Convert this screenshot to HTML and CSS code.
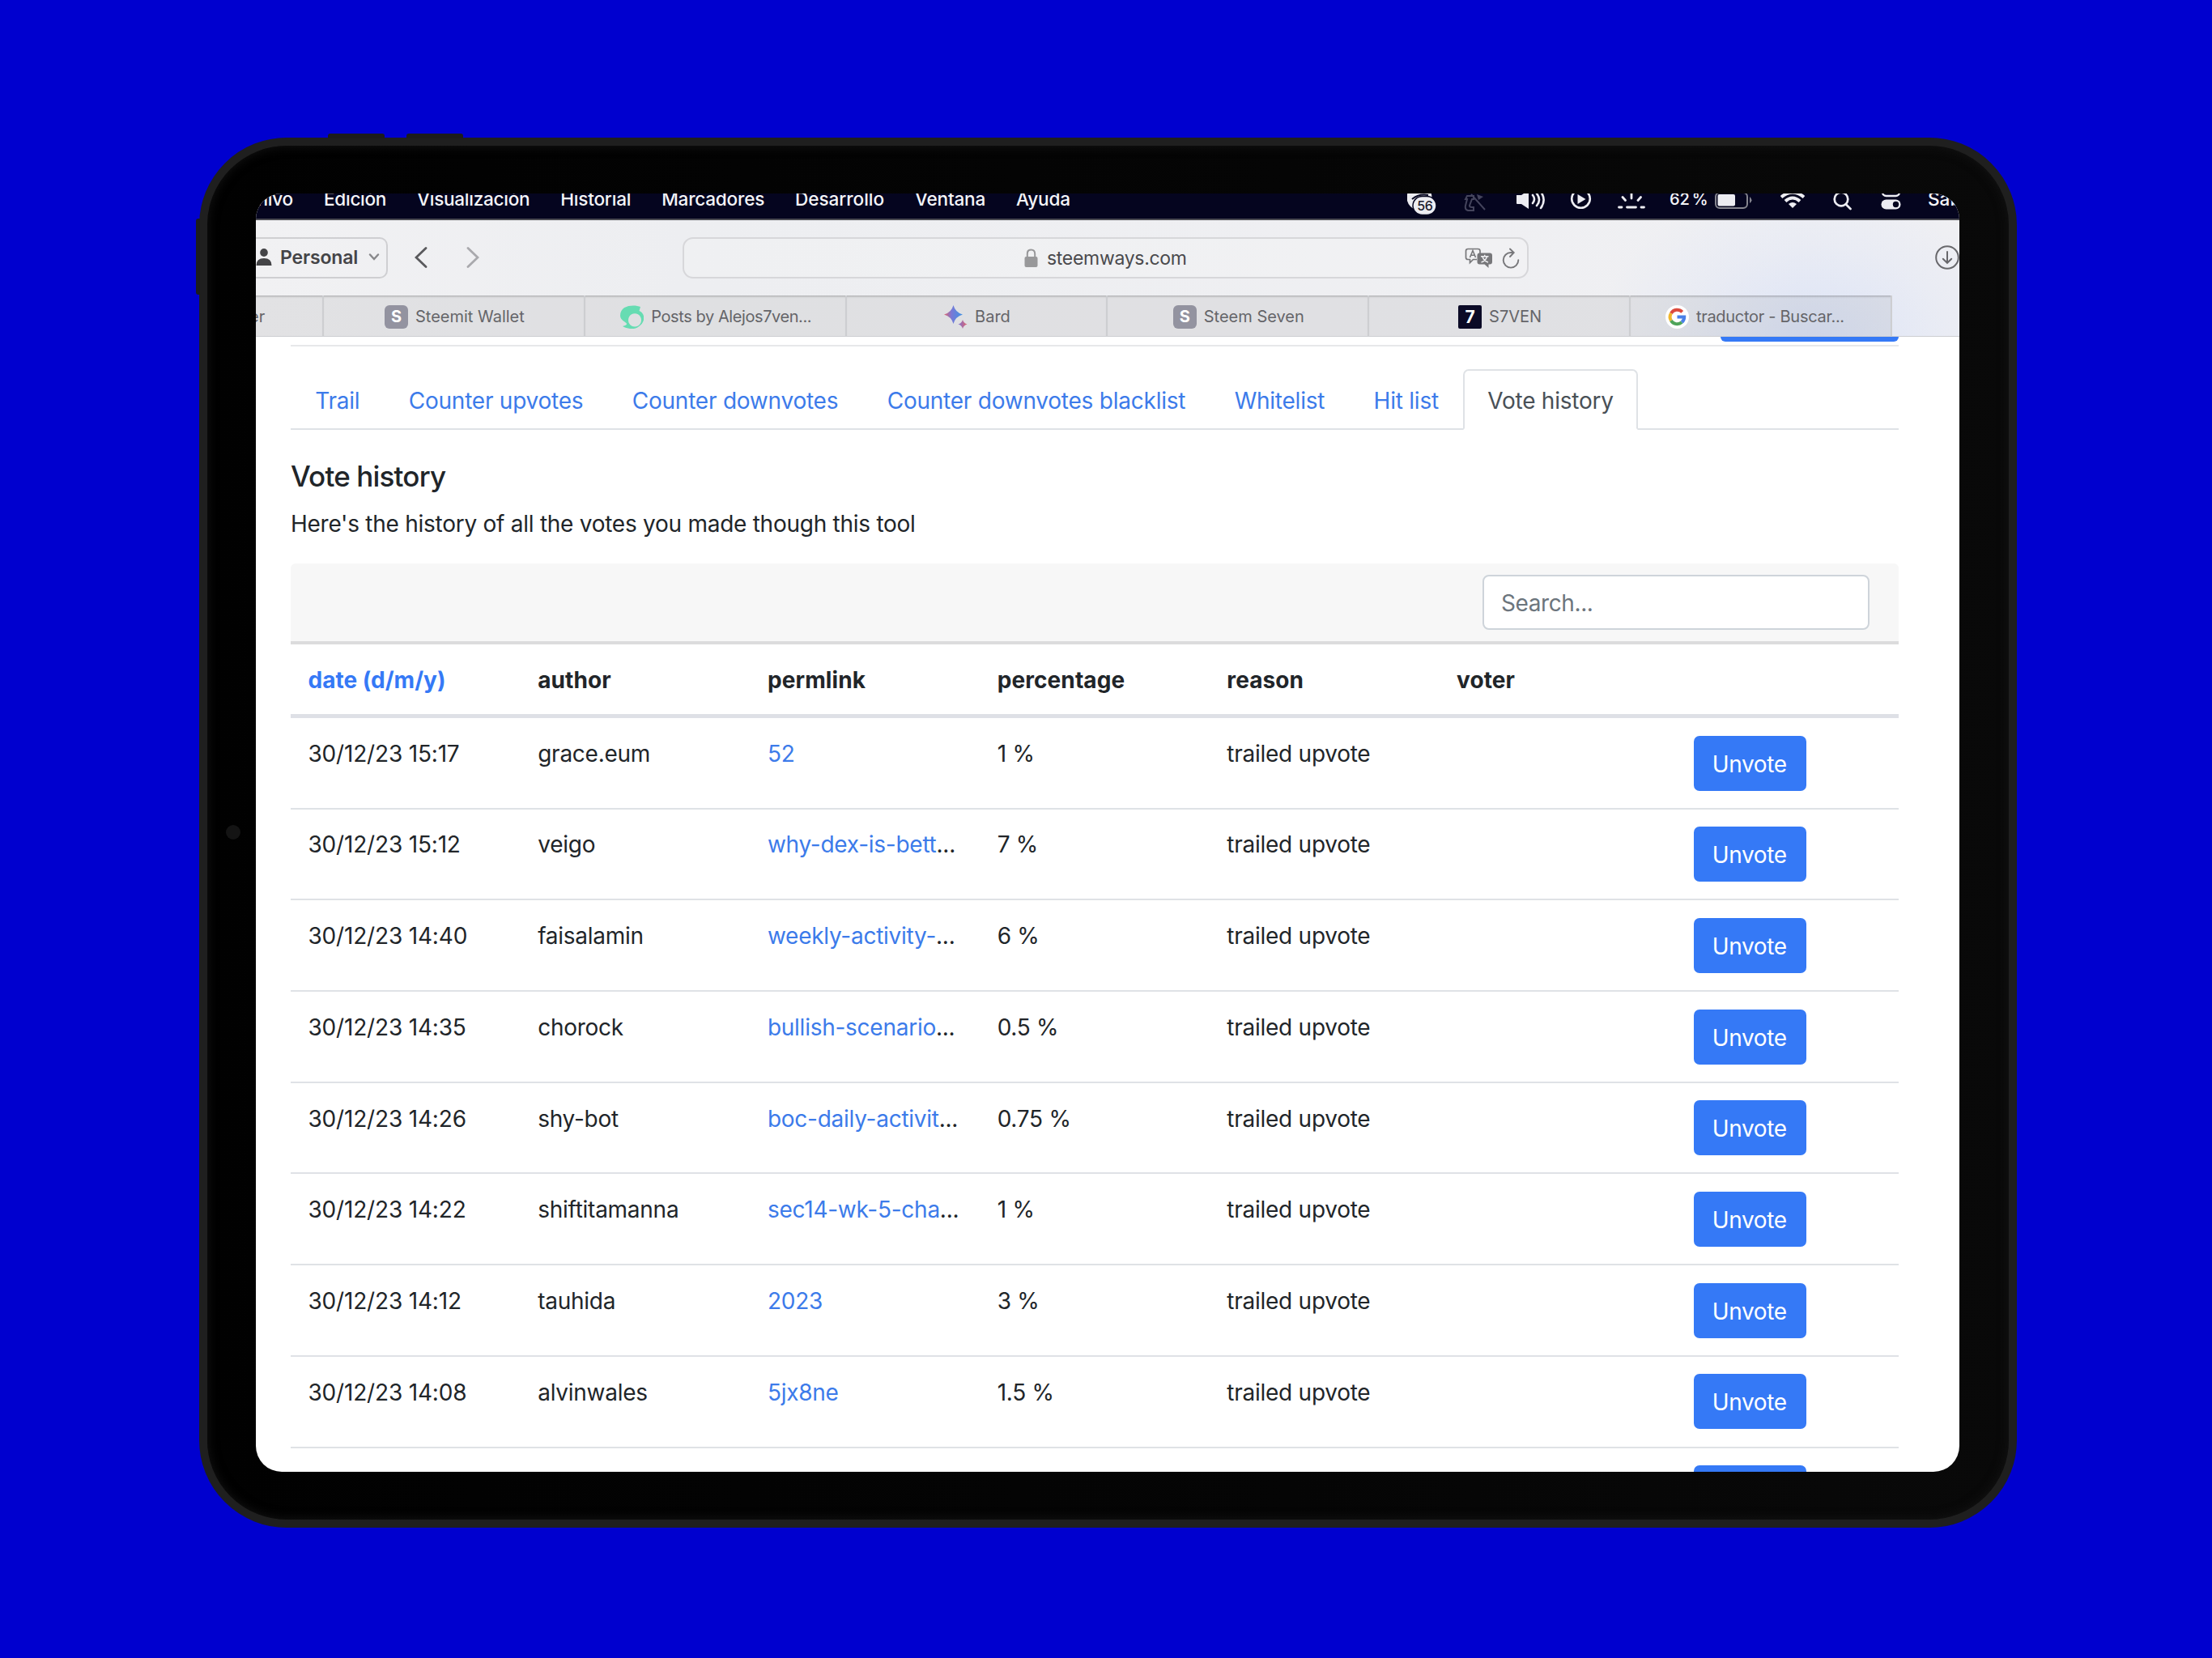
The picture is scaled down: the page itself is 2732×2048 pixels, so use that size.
FILE: index.html
```html
<!DOCTYPE html>
<html lang="es">
<head>
<meta charset="utf-8">
<title>Steemways – Vote history</title>
<link rel="stylesheet" href="styles.css">
</head>
<body>
<div class="tablet">
  <span class="key key-up"></span>
  <span class="key key-down"></span>
  <span class="key key-power"></span>
  <span class="camera"></span>
  <div class="screen">
    <div class="menubar">
      <div class="menu-cut"><span>Archivo</span></div>
      <nav class="menus">
        <span class="m-tight">Edición</span>
        <span class="m-tight">Visualización</span>
        <span>Historial</span>
        <span>Marcadores</span>
        <span class="m-wide">Desarrollo</span>
        <span>Ventana</span>
        <span>Ayuda</span>
      </nav>
      <div class="status">
        <svg width="39" height="31" viewBox="1738 239 39 31">
          <circle cx="1753" cy="244" r="15.500" fill="#ededf2"/>
          <path d="M1744 246q8-7 20-5" fill="none" stroke="#05051f" stroke-width="2"/>
          <rect x="1745" y="242.500" width="29" height="23" rx="11.500" fill="#ededf2" stroke="#05051f" stroke-width="1.500"/>
          <text x="1759.800" y="259.800" text-anchor="middle" class="badge-text">56</text>
        </svg>
        <svg width="34" height="31" viewBox="1807 239 34 31" fill="none" stroke="#44445c" stroke-width="2">
          <path d="M1812 242h8v4h-2l-3 8q0 2 3 2h2v4h-7q-4-1-3-6l2-8h-2zM1817 240l17 19"/>
          <path d="M1824 240l8 3-6 4z" fill="#44445c" stroke="none"/>
        </svg>
        <svg width="38" height="31" viewBox="1871 239 38 31" fill="none" stroke="#ededf2" stroke-width="2.600" stroke-linecap="round">
          <path d="M1873 241h6l9-6v23l-9-6h-5q-1 0-1-1z" fill="#ededf2" stroke="none"/>
          <path d="M1893 241q4 5 0 10M1898 239q6 8 0 15M1902.500 236q8 11 .5 21"/>
        </svg>
        <svg width="28" height="31" viewBox="1939 239 28 31">
          <circle cx="1952.500" cy="245.500" r="11.300" fill="none" stroke="#ededf2" stroke-width="2.600"/>
          <path d="M1948.500 240v12l10-6z" fill="#ededf2"/>
        </svg>
        <svg width="35" height="31" viewBox="1997 239 35 31" fill="none" stroke="#ededf2" stroke-width="2.800" stroke-linecap="round">
          <path d="M1999.500 256h3.500M2009.500 256h11M2027 256h3.500M2015 238v7M2004 243.500l3.500 4M2026.500 243.500l-3.500 4"/>
        </svg>
        <div class="battery">
          <span>62 %</span>
          <svg width="47" height="31" viewBox="2118 239 47 31">
            <rect x="2119" y="238" width="39" height="19" rx="5" fill="none" stroke="#85858f" stroke-width="2"/>
            <rect x="2121.500" y="240" width="21.500" height="14.500" rx="2" fill="#ededf2"/>
            <path d="M2161 243q5 4.500 0 8z" fill="#85858f"/>
          </svg>
        </div>
        <svg width="38" height="31" viewBox="2195 239 38 31" fill="none" stroke="#ededf2" stroke-width="4">
          <path d="M2200 243.500q14-11.500 28 0M2205 248.500q9-8 18 0"/>
          <path d="M2209 252q5-4 10 0l-5 5z" fill="#ededf2" stroke="none"/>
        </svg>
        <svg width="28" height="31" viewBox="2263 239 28 31" fill="none" stroke="#ededf2" stroke-width="2.700" stroke-linecap="round">
          <circle cx="2274" cy="246" r="8.300"/><path d="M2280 252.500l5.500 5.500"/>
        </svg>
        <svg width="30" height="31" viewBox="2321 239 30 31">
          <rect x="2325" y="233" width="21" height="9" rx="4.500" fill="none" stroke="#ededf2" stroke-width="2.400"/>
          <rect x="2323.500" y="246.500" width="24" height="12" rx="6" fill="#ededf2"/>
          <circle cx="2341.500" cy="252.500" r="3.700" fill="#05051f"/>
        </svg>
        <span class="clock">Sáb</span>
      </div>
    </div>

    <div class="browser">
      <div class="toolbar">
        <div class="profile">
          <svg width="20" height="22" viewBox="0 0 20 22" fill="#444447"><ellipse cx="10" cy="5" rx="4.800" ry="5"/><path d="M.5 21q0-9 9.500-9t9.500 9z"/></svg>
          <span>Personal</span>
          <svg width="14" height="9" viewBox="0 0 14 9" fill="none" stroke="#88888b" stroke-width="2.400" stroke-linecap="round"><path d="M2 1.500l5 5.500 5-5.500"/></svg>
        </div>
        <svg class="nav-back" width="16" height="26" viewBox="0 0 16 26" fill="none" stroke="#59595c" stroke-width="2.800" stroke-linecap="round"><path d="M14 1.500L2 13l12 11.500"/></svg>
        <svg class="nav-forward" width="16" height="26" viewBox="0 0 16 26" fill="none" stroke="#a9a9ad" stroke-width="2.800" stroke-linecap="round"><path d="M2 1.500L14 13 2 24.500"/></svg>
        <div class="address">
          <svg width="17" height="24" viewBox="0 0 17 24"><rect x=".5" y="10" width="16" height="13" rx="2" fill="#98989a"/><path d="M3.800 11V6.500q0-5 4.700-5t4.700 5V11" fill="none" stroke="#98989a" stroke-width="2"/></svg>
          <span>steemways.com</span>
          <div class="address-tools">
            <svg width="35" height="26" viewBox="0 0 35 26">
              <path d="M4 1.500h12.500q2.500 0 2.500 2.500v3M15 14.500h-4.500L6.500 18.500v-4H4Q1.500 14.500 1.500 12V4q0-2.500 2.500-2.500" fill="none" stroke="#77777a" stroke-width="1.700"/>
              <path d="M6.500 12L10 3.500 13.500 12M7.700 9.300h4.600" fill="none" stroke="#77777a" stroke-width="1.600"/>
              <path d="M18.500 6.500h12.500q3 0 3 3v8q0 3-3 3h-1.500V25l-5-4.500h-6q-3 0-3-3v-8q0-3 3-3z" fill="#77777a"/>
              <path d="M20 10.800h9.500M24.700 8.800v2M27.500 11q-1.500 5-7 7M22 11q1.500 5 7 7" fill="none" stroke="#efeff2" stroke-width="1.500"/>
            </svg>
            <svg width="22" height="26" viewBox="0 0 22 26" fill="none" stroke="#77777a" stroke-width="1.900" stroke-linecap="round"><path d="M14.500 6H11a9.300 9.300 0 1 0 9.300 9.300M10 1.500L14.700 6 10 11"/></svg>
          </div>
        </div>
        <svg class="downloads" width="30" height="30" viewBox="0 0 30 30" fill="none" stroke="#68686c" stroke-width="2" stroke-linecap="round"><circle cx="15" cy="15" r="13.800"/><path d="M15 8v13.500M9.800 16.800l5.200 5 5.200-5"/></svg>
      </div>
      <div class="tabs">
        <div class="tab tab-cut">er</div>
        <div class="tab"><span class="fav fav-grey">S</span><span>Steemit Wallet</span></div>
        <div class="tab">
          <svg width="29" height="29" viewBox="0 0 29 29"><path fill="#66dcb2" fill-rule="evenodd" d="M25 2C19-.500 0-1.500 0 13c0 6 8 8 8 10s-3 2-5 3c7 4 15 4 19 1 10-6 9-17 1.500-20zM18 10.200a8 8.200 0 1 0 .01 0z"/></svg>
          <span class="t-tight">Posts by Alejos7ven...</span>
        </div>
        <div class="tab">
          <svg width="29" height="29" viewBox="0 0 29 29">
            <defs>
              <linearGradient id="spark" x1="0" x2="1"><stop offset="0" stop-color="#e0646c"/><stop offset=".4" stop-color="#7a78d6"/><stop offset="1" stop-color="#3f93e4"/></linearGradient>
              <linearGradient id="spark2" x1="1" x2="0"><stop offset="0" stop-color="#e0646c"/><stop offset="1" stop-color="#7f74d2"/></linearGradient>
            </defs>
            <path fill="url(#spark)" d="M11.500 0q2.500 9 11.500 11.500-9 2.500-11.500 11.500-2.500-9-11.500-11.500 9-2.500 11.500-11.500z"/>
            <path fill="url(#spark2)" d="M23 18q1.300 4.200 5.500 5.500-4.200 1.300-5.500 5.500-1.300-4.200-5.500-5.500 4.200-1.300 5.500-5.500z"/>
          </svg>
          <span>Bard</span>
        </div>
        <div class="tab"><span class="fav fav-grey">S</span><span>Steem Seven</span></div>
        <div class="tab"><span class="fav fav-navy">7</span><span>S7VEN</span></div>
        <div class="tab tab-last">
          <svg width="29" height="29" viewBox="0 0 29 29" fill="none" stroke-width="4">
            <circle cx="14.500" cy="14.500" r="14.500" fill="#fff"/>
            <path d="M20.700 8.300A8.800 8.800 0 0 0 6.900 10" stroke="#dd4b3e"/>
            <path d="M6.900 10a8.800 8.800 0 0 0 0 9" stroke="#f0b62c"/>
            <path d="M6.900 19a8.800 8.800 0 0 0 13.300 2.100" stroke="#4fa45a"/>
            <path d="M20.200 21.100a8.800 8.800 0 0 0 3-6.600H14.500" stroke="#4a80e8"/>
          </svg>
          <span class="t-mid">traductor - Buscar...</span>
        </div>
      </div>
    </div>

    <main class="page">
      <div class="top-button"></div>
      <hr>
      <nav class="nav-tabs">
        <a>Trail</a><a>Counter upvotes</a><a>Counter downvotes</a><a>Counter downvotes blacklist</a><a>Whitelist</a><a>Hit list</a><a class="active">Vote history</a>
      </nav>
      <h4>Vote history</h4>
      <p>Here's the history of all the votes you made though this tool</p>
      <div class="card-header"><div class="search">Search...</div></div>
      <div class="row head"><span class="sorted">date (d/m/y)</span><span>author</span><span>permlink</span><span>percentage</span><span>reason</span><span>voter</span><span></span></div>
      <div class="row"><span>30/12/23 15:17</span><span>grace.eum</span><span><a>52</a></span><span>1 %</span><span>trailed upvote</span><span></span><span class="action"><button>Unvote</button></span></div>
      <div class="row"><span>30/12/23 15:12</span><span>veigo</span><span><a>why-dex-is-bett</a>...</span><span>7 %</span><span>trailed upvote</span><span></span><span class="action"><button>Unvote</button></span></div>
      <div class="row"><span>30/12/23 14:40</span><span>faisalamin</span><span><a>weekly-activity-</a>...</span><span>6 %</span><span>trailed upvote</span><span></span><span class="action"><button>Unvote</button></span></div>
      <div class="row"><span>30/12/23 14:35</span><span>chorock</span><span><a>bullish-scenario</a>...</span><span>0.5 %</span><span>trailed upvote</span><span></span><span class="action"><button>Unvote</button></span></div>
      <div class="row"><span>30/12/23 14:26</span><span>shy-bot</span><span><a>boc-daily-activit</a>...</span><span>0.75 %</span><span>trailed upvote</span><span></span><span class="action"><button>Unvote</button></span></div>
      <div class="row"><span>30/12/23 14:22</span><span>shiftitamanna</span><span><a>sec14-wk-5-cha</a>...</span><span>1 %</span><span>trailed upvote</span><span></span><span class="action"><button>Unvote</button></span></div>
      <div class="row"><span>30/12/23 14:12</span><span>tauhida</span><span><a>2023</a></span><span>3 %</span><span>trailed upvote</span><span></span><span class="action"><button>Unvote</button></span></div>
      <div class="row"><span>30/12/23 14:08</span><span>alvinwales</span><span><a>5jx8ne</a></span><span>1.5 %</span><span>trailed upvote</span><span></span><span class="action"><button>Unvote</button></span></div>
      <div class="row"><span></span><span></span><span></span><span></span><span></span><span></span><span class="action"><button></button></span></div>
    </main>
  </div>
</div>
</body>
</html>
```
FILE: styles.css
```css
* { box-sizing: border-box; }

body {
  margin: 0;
  height: 2048px;
  overflow: hidden;
  background: #0000cf;
  font-family: Inter, "Liberation Sans", sans-serif;
  color: #212529;
}

svg { display: block; flex: none; }

/* device */
.tablet {
  position: relative;
  float: left;
  width: 2245px;
  height: 1717px;
  margin: 170px 0 0 246px;
  padding: 59px 0 0 60px;
  border: 10px solid #1f1f1f;
  border-radius: 108px;
  background: linear-gradient(90deg, #010101, #050505 60%, #090909);
  box-shadow: inset 0 0 14px #141414;
}

.key { position: absolute; background: #1c1c1c; }
.key-up { left: 149px; top: -15px; width: 70px; height: 6px; border-radius: 3px 3px 0 0; }
.key-down { left: 246px; top: -15px; width: 70px; height: 6px; border-radius: 3px 3px 0 0; }
.key-power { left: -14px; top: 90px; width: 5px; height: 94px; border-radius: 3px 0 0 3px; }
.camera { position: absolute; left: 23px; top: 839px; width: 18px; height: 18px; border-radius: 50%; background: #141414; }

.screen {
  width: 2104px;
  height: 1579px;
  border-radius: 32px;
  overflow: hidden;
  background: #fff;
}

/* system menu bar */
.menubar {
  display: flex;
  height: 33px;
  border-bottom: 2px solid #4b4b52;
  background: #05051f;
  color: #f5f5f8;
  font-size: 22.6px;
  font-weight: 500;
  line-height: 14px;
  letter-spacing: -0.22px;
  white-space: nowrap;
}
.menu-cut { display: flex; justify-content: flex-end; width: 46px; height: 31px; overflow: hidden; flex: none; }
.menus { display: flex; gap: 37.9px; margin-left: 38px; }
.m-tight { letter-spacing: -0.3px; }
.m-wide { letter-spacing: -0.06px; }
.status { display: flex; gap: 30px; margin-left: auto; }
.battery { display: flex; justify-content: space-between; width: 103px; font-size: 20px; }
.battery span { width: 47px; letter-spacing: -0.2px; word-spacing: -2px; }
.badge-text { font: 500 16px Inter, sans-serif; letter-spacing: -0.5px; fill: #1c1c2c; }
.clock { width: 39px; height: 31px; letter-spacing: 0; }

/* browser chrome */
.browser {
  background:
    radial-gradient(ellipse 270px 200px at 1925px 150px, rgba(190, 208, 252, .4), rgba(190, 208, 252, .13) 60%, transparent),
    linear-gradient(90deg, #f1f1f3, #edeef1 25%, #f0f0f3);
}
.toolbar { display: flex; align-items: center; height: 93px; padding-bottom: 1px; }
.profile {
  display: flex;
  align-items: center;
  width: 163px;
  height: 51px;
  padding-bottom: 1px;
  border: 2px solid #cfcfd2;
  border-left: 0;
  border-radius: 0 10px 10px 0;
  color: #444447;
  font-size: 23px;
  font-weight: 600;
  letter-spacing: -0.16px;
}
.profile span { width: 97px; margin: 0 12px 0 10px; }
.nav-back { margin-left: 33px; }
.nav-forward { margin-left: 48px; }
.address {
  display: flex;
  align-items: center;
  gap: 11px;
  width: 1045px;
  height: 51px;
  margin-left: 251px;
  padding: 1px 0 0 420px;
  border: 2px solid #d7d7da;
  border-radius: 13px;
  background: rgba(255, 255, 255, .12);
  color: #4a4a4d;
  font-size: 23px;
  letter-spacing: -0.3px;
}
.address > span { padding-top: 1px; }
.address-tools { display: flex; gap: 11px; margin: 0 9px 0 auto; }
.downloads { margin-left: 502px; }

.tabs { display: flex; height: 51px; border-bottom: 1px solid #cdced2; }
.tab {
  display: flex;
  align-items: center;
  justify-content: center;
  gap: 9px;
  width: 322.8px;
  flex: none;
  padding: 2px 0 0 2px;
  border-right: 2px solid #cdced1;
  background: rgba(0, 0, 0, .06);
  box-shadow: inset 0 3px 3px -2px rgba(0, 0, 0, .28);
  color: #656569;
  font-size: 20px;
  white-space: nowrap;
}
.tab-cut { width: 84px; justify-content: flex-start; padding-left: 0; text-indent: -8px; overflow: hidden; }
.tab-last { padding-right: 16px; }
.t-tight { letter-spacing: -0.42px; }
.t-mid { letter-spacing: -0.29px; }
.fav { display: grid; place-items: center; width: 29px; height: 29px; color: #fff; font-weight: 700; font-size: 20px; line-height: 29px; }
.fav-grey { border-radius: 6px; background: #9393a0; }
.fav-navy { border-radius: 2px; background: #0b0a26; font-size: 21px; }

/* page */
.page { padding: 0 75px 0 43px; font-size: 28px; line-height: 42px; letter-spacing: -0.26px; }
.top-button { width: 220px; height: 6px; margin-left: auto; border-radius: 0 0 8px 8px; background: #3579f6; }
hr { height: 2px; margin: 4px 0 28px; border: 0; background: #e7e8ea; }
a { color: #3c7bea; }

.nav-tabs { display: flex; height: 75px; border-bottom: 2px solid #dfe2e6; }
.nav-tabs a { height: 75px; padding: 16px 28.2px 0; border: 2px solid transparent; letter-spacing: -0.23px; white-space: nowrap; }
.nav-tabs .active { color: #495057; border-color: #dfe2e6; border-bottom-color: #fff; border-radius: 7px 7px 0 0; background: #fff; }

h4 { margin: 36px 0 17px; font-size: 35px; font-weight: 500; line-height: 42px; letter-spacing: -0.83px; }
p { margin: 0 0 28px; }

.card-header {
  display: flex;
  justify-content: flex-end;
  height: 100px;
  padding: 14px 36px 0 0;
  border-bottom: 4px solid #dcdcdd;
  border-radius: 6px 6px 0 0;
  background: #f7f7f7;
}
.search { width: 478px; height: 68px; padding: 12px 21px; border: 2px solid #ced4da; border-radius: 8px; background: #fff; color: #6c757d; letter-spacing: -0.4px; }

.row { display: grid; grid-template-columns: repeat(7, 1fr); height: 112.7px; padding-top: 21px; border-bottom: 2px solid #dfe2e6; white-space: nowrap; }
.row > span { padding: 1.8px 0 0 21.5px; }
.row > span:first-child { letter-spacing: -0.18px; }
.head { height: 91px; border-bottom: 5px solid #dee0e6; font-weight: 700; letter-spacing: 0.1px; }
.head > .sorted:first-child { color: #3579f6; letter-spacing: 0; }
.row > .action { padding: 0.5px 0 0 31px; }
button {
  display: block;
  width: 139px;
  height: 68px;
  padding: 2px 2px 0 0;
  border: 0;
  border-radius: 7px;
  background: #3579f6;
  color: #fff;
  font: inherit;
  letter-spacing: -0.35px;
}
```
